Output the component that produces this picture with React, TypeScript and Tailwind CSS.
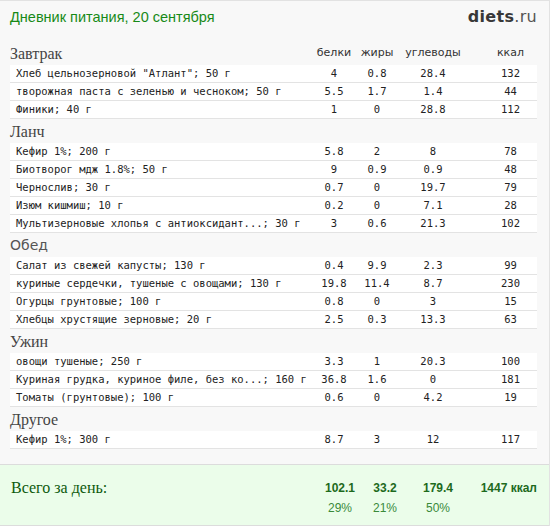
import React from 'react';

type Item = { name: string; p: string; f: string; c: string; k: string };
type Meal = { title: string; sans?: boolean; items: Item[] };

const meals: Meal[] = [
  {
    title: 'Завтрак',
    items: [
      { name: 'Хлеб цельнозерновой "Атлант"; 50 г', p: '4', f: '0.8', c: '28.4', k: '132' },
      { name: 'творожная паста с зеленью и чесноком; 50 г', p: '5.5', f: '1.7', c: '1.4', k: '44' },
      { name: 'Финики; 40 г', p: '1', f: '0', c: '28.8', k: '112' },
    ],
  },
  {
    title: 'Ланч',
    items: [
      { name: 'Кефир 1%; 200 г', p: '5.8', f: '2', c: '8', k: '78' },
      { name: 'Биотворог мдж 1.8%; 50 г', p: '9', f: '0.9', c: '0.9', k: '48' },
      { name: 'Чернослив; 30 г', p: '0.7', f: '0', c: '19.7', k: '79' },
      { name: 'Изюм кишмиш; 10 г', p: '0.2', f: '0', c: '7.1', k: '28' },
      { name: 'Мультизерновые хлопья с антиоксидант...; 30 г', p: '3', f: '0.6', c: '21.3', k: '102' },
    ],
  },
  {
    title: 'Обед',
    sans: true,
    items: [
      { name: 'Салат из свежей капусты; 130 г', p: '0.4', f: '9.9', c: '2.3', k: '99' },
      { name: 'куриные сердечки, тушеные с овощами; 130 г', p: '19.8', f: '11.4', c: '8.7', k: '230' },
      { name: 'Огурцы грунтовые; 100 г', p: '0.8', f: '0', c: '3', k: '15' },
      { name: 'Хлебцы хрустящие зерновые; 20 г', p: '2.5', f: '0.3', c: '13.3', k: '63' },
    ],
  },
  {
    title: 'Ужин',
    items: [
      { name: 'овощи тушеные; 250 г', p: '3.3', f: '1', c: '20.3', k: '100' },
      { name: 'Куриная грудка, куриное филе, без ко...; 160 г', p: '36.8', f: '1.6', c: '0', k: '181' },
      { name: 'Томаты (грунтовые); 100 г', p: '0.6', f: '0', c: '4.2', k: '19' },
    ],
  },
  {
    title: 'Другое',
    items: [{ name: 'Кефир 1%; 300 г', p: '8.7', f: '3', c: '12', k: '117' }],
  },
];

const serif = "font-['Liberation_Serif',serif]";
const sans = "font-['DejaVu_Sans',sans-serif]";
const mono = "font-['DejaVu_Sans_Mono',monospace]";

function Row({ it }: { it: Item }) {
  return (
    <div className={`flex h-[18px] items-center bg-white border-b border-[#e3e3e3] text-[10.5px] text-[#222] ${mono}`}>
      <div className="flex-1 pl-[6px] whitespace-nowrap">{it.name}</div>
      <div className="w-[44px] text-center">{it.p}</div>
      <div className="w-[42px] text-center">{it.f}</div>
      <div className="w-[70px] text-center">{it.c}</div>
      <div className="w-[69px] pl-[16px] text-center">{it.k}</div>
    </div>
  );
}

function MealBlock({ meal, first }: { meal: Meal; first?: boolean }) {
  return (
    <div>
      <div className="flex h-[24px] items-center pt-[1px]">
        <div
          className={
            meal.sans
              ? `flex-1 text-[14px] text-[#555] ${sans}`
              : `flex-1 text-[16px] text-[#444] ${serif}`
          }
        >
          {meal.title}
        </div>
        {first && (
          <div className={`flex text-[11px] text-[#333] ${sans}`}>
            <div className="w-[44px] text-center">белки</div>
            <div className="w-[42px] text-center">жиры</div>
            <div className="w-[70px] text-center">углеводы</div>
            <div className="w-[69px] pl-[16px] text-center">ккал</div>
          </div>
        )}
      </div>
      {meal.items.map((it, i) => (
        <Row key={i} it={it} />
      ))}
    </div>
  );
}

export default function App() {
  return (
    <div className="w-[550px] h-[526px] bg-[#f8f8f8] border-r border-t border-[#e2e2e2] flex flex-col overflow-hidden">
      <div className="flex h-[40px] items-start justify-between pl-[10px] pr-[12px] pt-[6px]">
        <div className="text-[14.5px] leading-[20px] text-[#178a17] font-['Liberation_Sans',sans-serif]">
          Дневник питания, 20 сентября
        </div>
        <div className="text-[16px] leading-[20px] font-['DejaVu_Sans',sans-serif] tracking-[0.3px]">
          <span className="font-bold text-[#383838]">diets</span>
          <span className="text-[#555]">.ru</span>
        </div>
      </div>
      <div className="pl-[10px] pr-[12px]">
        {meals.map((m, i) => (
          <MealBlock key={i} meal={m} first={i === 0} />
        ))}
      </div>
      <div className="mt-[15px] h-[62px] bg-[#ebfdea] border-t border-b border-[#dcdcdc] flex pr-[12px]">
        <div className={`flex-1 pl-[11px] pt-[11px] text-[16px] text-[#0d5a0d] ${serif}`}>Всего за день:</div>
        <div className="flex pt-[14px] font-['Liberation_Sans',sans-serif] text-[12px]">
          <div className="w-[46px] flex flex-col items-center pl-[4px]">
            <span className="font-bold text-[#1d6a1d] leading-[18px]">102.1</span>
            <span className="text-[#3a8a3a] leading-[18px] mt-[2px]">29%</span>
          </div>
          <div className="w-[48px] flex flex-col items-center">
            <span className="font-bold text-[#1d6a1d] leading-[18px]">33.2</span>
            <span className="text-[#3a8a3a] leading-[18px] mt-[2px]">21%</span>
          </div>
          <div className="w-[58px] flex flex-col items-center">
            <span className="font-bold text-[#1d6a1d] leading-[18px]">179.4</span>
            <span className="text-[#3a8a3a] leading-[18px] mt-[2px]">50%</span>
          </div>
          <div className="w-[70px] flex flex-col items-end">
            <span className="font-bold text-[#1d6a1d] leading-[18px] whitespace-nowrap">1447 ккал</span>
          </div>
        </div>
      </div>
    </div>
  );
}
